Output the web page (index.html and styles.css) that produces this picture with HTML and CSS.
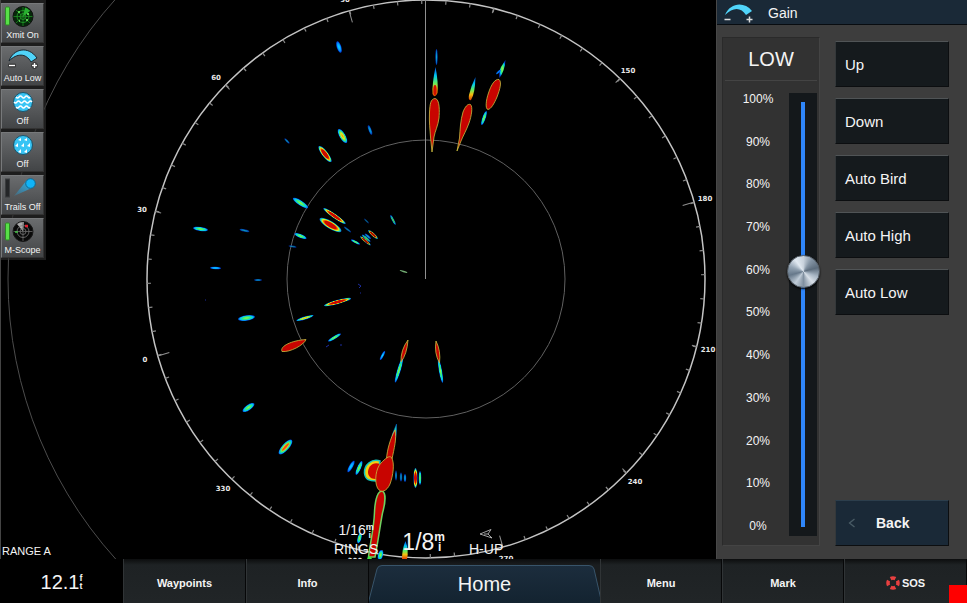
FILE: index.html
```html
<!DOCTYPE html>
<html lang="en">
<head>
    <meta charset="UTF-8">
    <meta name="viewport" content="width=device-width, initial-scale=1.0">
    <title>Radar</title>
    <link rel="stylesheet" href="styles.css">
</head>
<body>
    <div class="main">
        <div class="radar">
            <svg class="scope" viewBox="0 0 716 559" preserveAspectRatio="xMinYMin slice">
                <defs>
                    <radialGradient id="hot">
                        <stop offset="0.5" stop-color="#cc0800"/>
                        <stop offset="0.65" stop-color="#f08000"/>
                        <stop offset="0.76" stop-color="#e8f020"/>
                        <stop offset="0.87" stop-color="#20e0a0"/>
                        <stop offset="1" stop-color="#0060f0"/>
                    </radialGradient>
                    <radialGradient id="warm">
                        <stop offset="0" stop-color="#f09010"/>
                        <stop offset="0.35" stop-color="#e8e820"/>
                        <stop offset="0.7" stop-color="#30e880"/>
                        <stop offset="0.85" stop-color="#00b8f0"/>
                        <stop offset="1" stop-color="#0040e0"/>
                    </radialGradient>
                    <radialGradient id="mild">
                        <stop offset="0" stop-color="#a0f040"/>
                        <stop offset="0.45" stop-color="#30f080"/>
                        <stop offset="0.75" stop-color="#00c8f0"/>
                        <stop offset="1" stop-color="#0040e0"/>
                    </radialGradient>
                    <radialGradient id="cool">
                        <stop offset="0" stop-color="#10d8ff"/>
                        <stop offset="0.6" stop-color="#0098ff"/>
                        <stop offset="1" stop-color="#0030d0"/>
                    </radialGradient>
                    <linearGradient id="tip" x1="0" y1="0" x2="0" y2="1">
                        <stop offset="0" stop-color="#0050f0"/>
                        <stop offset="0.3" stop-color="#00c8f0"/>
                        <stop offset="0.55" stop-color="#60f060"/>
                        <stop offset="0.75" stop-color="#f0c010"/>
                        <stop offset="1" stop-color="#e04000"/>
                    </linearGradient>
                </defs>

                <!-- range rings -->
                <circle class="ring far" cx="426" cy="279" r="418"/>
                <circle class="ring" cx="426" cy="279" r="139"/>
                <circle class="ring edge" cx="426" cy="279" r="279"/>
                <circle class="ticks" cx="426" cy="279" r="277" pathLength="720" stroke-dasharray="0.5 9.5" transform="rotate(-16 426 279)"/>
                <g class="major">
                    <path d="M426 0v12" transform="rotate(-16 426 279)"/>
                    <path d="M426 0v5" transform="rotate(14 426 279)"/>
                    <path d="M426 0v6" transform="rotate(44 426 279)"/>
                    <path d="M426 0v12" transform="rotate(74 426 279)"/>
                    <path d="M426 0v5" transform="rotate(104 426 279)"/>
                    <path d="M426 0v6" transform="rotate(134 426 279)"/>
                    <path d="M426 0v12" transform="rotate(164 426 279)"/>
                    <path d="M426 0v12" transform="rotate(254 426 279)"/>
                    <path d="M426 0v6" transform="rotate(284 426 279)"/>
                    <path d="M426 0v6" transform="rotate(314 426 279)"/>
                </g>
                <path class="heading" d="M425.5 0V279"/>

                <!-- echoes, upper left -->
                <ellipse cx="339" cy="47" rx="6" ry="2.3" fill="url(#cool)" transform="rotate(72 339 47)"/>
                <ellipse cx="287" cy="141" rx="3.5" ry="1" fill="url(#cool)" opacity=".7" transform="rotate(45 287 141)"/>
                <ellipse cx="325" cy="154" rx="10" ry="3" fill="url(#hot)" transform="rotate(52 325 154)"/>
                <ellipse cx="342.5" cy="136" rx="8" ry="3" fill="url(#warm)" transform="rotate(60 342.5 136)"/>
                <ellipse cx="370" cy="130" rx="5" ry="1.5" fill="url(#cool)" opacity=".8" transform="rotate(70 370 130)"/>
                <ellipse cx="300.5" cy="203" rx="9" ry="2.5" fill="url(#mild)" transform="rotate(33 300.5 203)"/>
                <ellipse cx="334.5" cy="216" rx="13.5" ry="2.2" fill="url(#hot)" transform="rotate(35 334.5 216)"/>
                <ellipse cx="330.5" cy="225" rx="12.5" ry="3.8" fill="url(#hot)" transform="rotate(31 330.5 225)"/>
                <ellipse cx="200.5" cy="229" rx="7.5" ry="2" fill="url(#mild)" transform="rotate(8 200.5 229)"/>
                <ellipse cx="244.5" cy="230.5" rx="5" ry="1.2" fill="url(#cool)" opacity=".7" transform="rotate(12 244.5 230.5)"/>
                <ellipse cx="300.5" cy="236" rx="6.5" ry="2" fill="url(#mild)" transform="rotate(22 300.5 236)"/>
                <ellipse cx="347.5" cy="229.5" rx="4.5" ry="1" fill="url(#cool)" opacity=".6" transform="rotate(38 347.5 229.5)"/>
                <ellipse cx="366.5" cy="221" rx="3.5" ry="0.8" fill="url(#cool)" opacity=".5" transform="rotate(45 366.5 221)"/>
                <ellipse cx="393" cy="220" rx="5.5" ry="1.2" fill="url(#mild)" opacity=".8" transform="rotate(62 393 220)"/>
                <ellipse cx="373" cy="234.5" rx="6.5" ry="1.6" fill="url(#hot)" opacity=".85" transform="rotate(42 373 234.5)"/>
                <g transform="rotate(40 366 240)" opacity=".8">
                    <ellipse cx="365" cy="236" rx="4" ry="1.2" fill="url(#cool)"/>
                    <ellipse cx="365" cy="238.5" rx="5.5" ry="1.3" fill="url(#mild)"/>
                    <ellipse cx="366" cy="241" rx="7" ry="1.4" fill="url(#hot)"/>
                </g>
                <ellipse cx="355.5" cy="242" rx="5" ry="1.2" fill="url(#mild)" transform="rotate(28 355.5 242)"/>
                <ellipse cx="292.5" cy="246.5" rx="4" ry="1" fill="url(#cool)" opacity=".6" transform="rotate(10 292.5 246.5)"/>
                <ellipse cx="215.5" cy="268" rx="5.5" ry="1.3" fill="url(#cool)" transform="rotate(2 215.5 268)"/>
                <ellipse cx="258" cy="280" rx="4" ry="1" fill="url(#cool)" opacity=".7"/>
                <ellipse cx="403.5" cy="271.5" rx="4" ry="0.7" fill="#90d890" opacity=".8" transform="rotate(18 403.5 271.5)"/>
                <path class="speck" d="M358 284l3 2M359 288l2-2M360 293h1M205 300h1M326 347l3-2M340 345h2"/>

                <!-- echoes, lower left -->
                <ellipse cx="337.5" cy="302" rx="14" ry="2.1" fill="url(#hot)" transform="rotate(-15 337.5 302)"/>
                <ellipse cx="246.5" cy="318" rx="8.5" ry="2.7" fill="url(#mild)" transform="rotate(-8 246.5 318)"/>
                <ellipse cx="305" cy="318" rx="9" ry="1.5" fill="url(#warm)" transform="rotate(-17 305 318)"/>
                <path class="echo" d="M282 351.500C279.500 346 292 340.500 306 339.500C304 345 290 352.500 282 351.500Z"/>
                <ellipse cx="334.5" cy="337.5" rx="7.5" ry="1.6" fill="url(#mild)" transform="rotate(-31 334.5 337.5)"/>
                <ellipse cx="382.5" cy="355.5" rx="5" ry="1.3" fill="url(#cool)" transform="rotate(-62 382.5 355.5)"/>
                <ellipse cx="399" cy="370" rx="13" ry="1.8" fill="url(#mild)" transform="rotate(-73 399 370)"/>
                <path class="echo" d="M408 340Q407 354 401 362Q400.500 350 408 340Z"/>
                <ellipse cx="440.5" cy="371" rx="12" ry="1.6" fill="url(#mild)" transform="rotate(80 440.5 371)"/>
                <path class="echo" d="M436 341Q441 351 439.500 363Q434 353 436 341Z"/>
                <ellipse cx="248.5" cy="407.5" rx="7" ry="2.7" fill="url(#mild)" transform="rotate(-35 248.5 407.5)"/>
                <ellipse cx="285.5" cy="447" rx="9.5" ry="3.5" fill="url(#warm)" transform="rotate(-48 285.5 447)"/>
                <ellipse cx="285.5" cy="447" rx="5" ry="1.2" fill="#f05010" transform="rotate(-48 285.5 447)"/>

                <!-- echoes, top -->
                <ellipse cx="436.5" cy="57" rx="1.2" ry="8" fill="url(#cool)" opacity=".8"/>
                <path fill="url(#tip)" d="M435.500 67Q438.500 82 437.500 93Q435 99 432.500 94Q432 84 435.500 67Z"/>
                <ellipse cx="435" cy="90" rx="1.7" ry="5" fill="#d01000"/>
                <path class="echo" d="M435 98.500C440 99 439.500 112 439 118C438 126 435 131 434 137L432 152L430.500 137C430 129 429 122 429.500 112C430 104 430.500 99 435 98.500Z"/>
                <path fill="url(#tip)" d="M475.500 77Q475 94 471 100Q468 101 469 95Q471 86 475.500 77Z"/>
                <path class="echo" d="M470.500 104.500C473 107 471.500 116 469 123C466.500 130 463 136 461 141L457 151L459.500 138C460 130 460.500 120 463 112C465 107 467.500 103.500 470.500 104.500Z"/>
                <path fill="url(#mild)" d="M505.500 60Q505 70 499.500 78Q498.500 72 501 67Z"/>
                <ellipse cx="498.5" cy="72" rx="1" ry="3" fill="#0070f0" transform="rotate(50 498.5 72)"/>
                <path class="echo" d="M499 79.500C502 82 500 89 497 97C494 104 491 109 488 109.500C485 109 486 100 488.500 93C491 85 495 78.500 499 79.500Z"/>
                <ellipse cx="484" cy="118" rx="7.5" ry="1.7" fill="url(#mild)" transform="rotate(-71 484 118)"/>

                <!-- echoes, bottom -->
                <ellipse cx="351" cy="466.5" rx="6.5" ry="1.9" fill="url(#cool)" transform="rotate(-60 351 466.5)"/>
                <ellipse cx="359" cy="468" rx="7.5" ry="2" fill="url(#mild)" transform="rotate(-66 359 468)"/>
                <path class="halo" d="M380 461C372 458 364 465 364.500 473C365 480 370 481 376 481Z"/>
                <path fill="#d00800" d="M380 464C373 461 367.500 467 368 473C369 478 372 479 377 479Z"/>
                <path class="tail" d="M396.500 424Q397 437 394 442L389 452L392.500 434Z"/>
                <path class="echo" d="M395 430C397 438 394 449 392 459L386.500 459C387 450 390.500 438 395 430Z"/>
                <path class="echo wide" d="M383 491.500C386 494 385 504 382.500 513C380 526 378 542 375 557L368.500 557C370 544 374 528 374.500 512C375 500 378 489 383 491.500Z"/>
                <path class="echo" d="M391.500 457.500C395 463 393 476 390 484C387 491 381 494 377.500 488C374 481 376 468 381 463C385 459 389 455 391.500 457.500Z"/>
                <ellipse cx="396" cy="475.5" rx="1" ry="5" fill="url(#cool)" opacity=".7"/>
                <ellipse cx="401" cy="477" rx="1.2" ry="4.5" fill="url(#cool)" opacity=".7"/>
                <ellipse cx="405" cy="478" rx="1.2" ry="4" fill="url(#cool)" opacity=".8"/>
                <ellipse cx="415.5" cy="478" rx="2" ry="10" fill="url(#hot)"/>
                <ellipse cx="420" cy="478" rx="1.3" ry="7" fill="url(#mild)"/>
                <ellipse cx="359.5" cy="538" rx="2" ry="5.5" fill="url(#mild)" transform="rotate(15 359.5 538)"/>
                <ellipse cx="380.5" cy="555" rx="2.5" ry="5" fill="url(#mild)" transform="rotate(15 380.5 555)"/>
                <path fill="#40e840" d="M367 559q2-6 5 0Z"/>
                <path fill="url(#tip)" d="M405.500 541Q409 550 407 559H402Q402 549 405.500 541Z"/>

                <g class="degrees">
                    <text x="345" y="2">90</text>
                    <text x="216" y="80">60</text>
                    <text x="142" y="212">30</text>
                    <text x="145" y="362">0</text>
                    <text x="223" y="491">330</text>
                    <text x="355" y="563">300</text>
                    <text x="506" y="561">270</text>
                    <text x="635" y="484">240</text>
                    <text x="708" y="352">210</text>
                    <text x="705" y="201">180</text>
                    <text x="628" y="73">150</text>
                </g>
            </svg>

            <div class="tools">
                <button class="tool">
                    <svg class="icon" viewBox="0 0 40 24">
                        <rect x="2.5" y="3" width="4" height="18" rx="1" fill="#58e048" stroke="#2c8a24"/>
                        <circle cx="20" cy="12.5" r="10" fill="#06280a" stroke="#101010"/>
                        <path d="M20 3v19M10.500 12.500h19M13 6l14 13M27 6L13 19" stroke="#1d8a22" stroke-width=".8" fill="none"/>
                        <circle cx="20" cy="12.5" r="6" fill="none" stroke="#22a52a" stroke-width=".8"/>
                        <circle cx="20" cy="12.5" r="3" fill="none" stroke="#22a52a" stroke-width=".8"/>
                        <path d="M20 12.500L22 3.500A9 9 0 0 1 27 7Z" fill="#28b030"/>
                        <path d="M15 8h2M23 16h2M16 17h1M24 10h2" stroke="#70f060" stroke-width="1.5"/>
                    </svg>
                    <span>Xmit On</span>
                </button>
                <button class="tool">
                    <svg class="icon" viewBox="0 0 40 24">
                        <path d="M6 14C10 2 25-2 34 11L28 15C23 6 14 6 6 14Z" fill="#50d4fa" stroke="#1b2730"/>
                        <path d="M5.500 18.500h7M28.500 18.500h6M31.500 15.500v6" stroke="#222" stroke-width="3.5"/>
                        <path d="M6 18.500h6M29 18.500h5M31.500 16v5" stroke="#fff" stroke-width="1.5"/>
                    </svg>
                    <span>Auto Low</span>
                </button>
                <button class="tool">
                    <svg class="icon" viewBox="0 0 40 24">
                        <circle cx="20" cy="12" r="9.5" fill="#38c4f4" stroke="#1a546c"/>
                        <path d="M13 7q1.500 2 3 0t3 0t3 0t3 0t2 0M11 12q1.500 2 3 0t3 0t3 0t3 0t3 0t3 0M13 17q1.500 2 3 0t3 0t3 0t3 0t2 0" fill="none" stroke="#fff" stroke-width="1.3"/>
                    </svg>
                    <span>Off</span>
                </button>
                <button class="tool">
                    <svg class="icon" viewBox="0 0 40 24">
                        <circle cx="20" cy="12" r="9.5" fill="#38c4f4" stroke="#1a546c"/>
                        <path d="M15 7l3-2v3zM21 7l3-2v3zM12 13l3-3v4zM18 13l3-3v4zM24 13l3-3v4zM15 19l3-3v4zM21 19l3-3v4z" fill="#fff"/>
                    </svg>
                    <span>Off</span>
                </button>
                <button class="tool">
                    <svg class="icon" viewBox="0 0 40 24">
                        <defs>
                            <linearGradient id="trail" x1="0" y1="1" x2="1" y2="0">
                                <stop offset="0" stop-color="#20a8e8" stop-opacity=".2"/>
                                <stop offset="1" stop-color="#20b8f8"/>
                            </linearGradient>
                        </defs>
                        <rect x="2.5" y="3" width="4" height="18" fill="#242628" stroke="#3a3c3e"/>
                        <path d="M11 20L24 4L31 11Z" fill="url(#trail)"/>
                        <circle cx="27.5" cy="7.5" r="4.8" fill="#10b4f8" stroke="#106890"/>
                    </svg>
                    <span>Trails Off</span>
                </button>
                <button class="tool">
                    <svg class="icon" viewBox="0 0 40 24">
                        <rect x="2.5" y="4" width="4" height="17" rx="1" fill="#58e048" stroke="#2c8a24"/>
                        <circle cx="20" cy="12.5" r="10" fill="#0a0a0a" stroke="#181818"/>
                        <path d="M20 12.500L14 5A10 10 0 0 1 21 3Z" fill="#aaa"/>
                        <path d="M20 3v19M10.500 12.500h19" stroke="#666" stroke-width=".8"/>
                        <circle cx="20" cy="12.5" r="6" fill="none" stroke="#777" stroke-width=".8"/>
                        <circle cx="20" cy="12.5" r="3" fill="none" stroke="#777" stroke-width=".8"/>
                        <path d="M22 7h3" stroke="#e02030" stroke-width="2.5"/>
                        <path d="M12 13h3" stroke="#40c040" stroke-width="1.5"/>
                    </svg>
                    <span>M-Scope</span>
                </button>
            </div>

            <div class="range-name">RANGE A</div>
            <div class="range-info">
                <div class="info">
                    <div class="small">1/16<span class="unit"><i>m</i><i>i</i></span></div>
                    <div>RINGS</div>
                </div>
                <div class="range">1/8<span class="unit"><i>m</i><i>i</i></span></div>
                <div class="info">
                    <svg class="arrow" viewBox="0 0 14 12"><path d="M1 6L12 1.500L9 6L13 10Z" fill="none" stroke="#ccc" stroke-width=".8"/><path d="M5 6h4" stroke="#ccc" stroke-width=".8"/></svg>
                    <div>H-UP</div>
                </div>
            </div>
        </div>

        <div class="panel">
            <div class="title">
                <svg class="gain-icon" viewBox="0 0 30 20">
                    <path d="M1 12C6 0 20-2 28 8L22 12C17 4 9 4 1 12Z" fill="#50d4fa"/>
                    <path d="M.5 16.500h6M22.500 16.500h6M25.500 13.500v6" stroke="#ddd" stroke-width="1.5"/>
                </svg>
                <h1>Gain</h1>
            </div>
            <div class="content">
                <div class="gain">
                    <label class="level" for="gain">LOW</label>
                    <div class="slider">
                        <ul class="scale">
                            <li>100%</li>
                            <li>90%</li>
                            <li>80%</li>
                            <li>70%</li>
                            <li>60%</li>
                            <li>50%</li>
                            <li>40%</li>
                            <li>30%</li>
                            <li>20%</li>
                            <li>10%</li>
                            <li>0%</li>
                        </ul>
                        <input class="track" id="gain" type="range" min="0" max="100" step="0.1" value="60.6">
                    </div>
                </div>
                <div class="options">
                    <button class="btn">Up</button>
                    <button class="btn">Down</button>
                    <button class="btn">Auto Bird</button>
                    <button class="btn">Auto High</button>
                    <button class="btn">Auto Low</button>
                    <button class="btn back">
                        <svg class="chevron" viewBox="0 0 8 10"><path d="M6.500 1L1.500 5L6.500 9" fill="none" stroke="#4a5c66" stroke-width="1.3"/></svg>
                        <span>Back</span>
                    </button>
                </div>
            </div>
        </div>
    </div>

    <div class="bar">
        <div class="depth">12.1<span class="unit"><i>f</i><i>t</i></span></div>
        <button class="key">Waypoints</button>
        <button class="key">Info</button>
        <button class="home">
            <svg class="tab" viewBox="0 0 231 38" preserveAspectRatio="none">
                <defs>
                    <linearGradient id="blue" x1="0" y1="0" x2="0" y2="1">
                        <stop offset="0" stop-color="#1c2d3d"/>
                        <stop offset="1" stop-color="#132330"/>
                    </linearGradient>
                </defs>
                <path d="M-1 39L8 4Q9 .5 13 .5H220Q224 .5 225 4L233 39Z" fill="url(#blue)" stroke="#38546a"/>
            </svg>
            <span>Home</span>
        </button>
        <button class="key">Menu</button>
        <button class="key">Mark</button>
        <button class="key">
            <svg class="sos" viewBox="0 0 14 14">
                <circle cx="7" cy="7" r="5" fill="none" stroke="#e84040" stroke-width="3.5" pathLength="8" stroke-dasharray="1.3 .7" stroke-dashoffset=".65"/>
            </svg>SOS
        </button>
        <div class="corner"></div>
    </div>
</body>
</html>
```

FILE: styles.css
```css
*{
    margin: 0;
    padding: 0;
    box-sizing: border-box;
}
body{
    height: 100vh;
    display: flex;
    flex-direction: column;
    background: #000;
    color: #f4f4f4;
    font-family: "Liberation Sans", Arial, sans-serif;
    font-size: 14px;
    overflow: hidden;
}
button{
    border: none;
    color: inherit;
    font-family: inherit;
    cursor: pointer;
}
.main{
    flex: 1;
    min-height: 0;
    display: flex;
}

/* radar */
.radar{
    flex: 1;
    min-width: 0;
    position: relative;
    overflow: hidden;
    border-left: 1px solid #444;
}
.scope{
    display: block;
    position: absolute;
    left: -1px;
    top: 0;
    width: calc(100% + 1px);
    height: 100%;
}
.ring{
    fill: none;
    stroke: #606060;
    stroke-width: 1;
}
.far{
    stroke: #4c4c4c;
}
.edge{
    stroke: #c4c4c4;
    stroke-width: 1.5;
}
.ticks{
    fill: none;
    stroke: #888;
    stroke-width: 4;
}
.major{
    stroke: #909090;
}
.heading{
    stroke: #909090;
}
.speck{
    stroke: #1c2ca0;
    fill: none;
}
.echo{
    fill: #c80400;
    stroke: #c8c040;
    stroke-width: 0.8;
}
.wide{
    stroke: #70d060;
    stroke-width: 1.5;
}
.tail{
    fill: #20d0b0;
    stroke: #0060d0;
    stroke-width: 0.5;
}
.halo{
    fill: #f0d010;
    stroke: #10c8c0;
    stroke-width: 1.5;
}
.degrees{
    fill: #e8e8e8;
    font-family: "DejaVu Sans", sans-serif;
    font-size: 7px;
    font-weight: bold;
    text-anchor: middle;
}

/* left buttons */
.tools{
    position: absolute;
    left: 0;
    top: 0;
    padding: 3px 2px 2px 0;
    display: flex;
    flex-direction: column;
    gap: 3px;
    background: rgba(45,45,45,0.65);
}
.tool{
    width: 43px;
    height: 40px;
    display: flex;
    flex-direction: column;
    align-items: center;
    background: linear-gradient(#6a6c6e, #424446);
    border: 1px solid #77797b;
    border-right-color: #333;
    border-bottom-color: #333;
    font-size: 9px;
    line-height: 14px;
    white-space: nowrap;
}
.icon{
    width: 40px;
    height: 24px;
    flex: none;
}

/* texts over the radar */
.range-name{
    position: absolute;
    left: 1px;
    bottom: 0;
    font-size: 11px;
    line-height: 16px;
}
.range-info{
    position: absolute;
    left: 333px;
    bottom: 0;
    display: flex;
    align-items: flex-end;
    gap: 24px;
}
.info{
    font-size: 14px;
    line-height: 19px;
    text-align: center;
}
.small{
    display: flex;
    justify-content: center;
    align-items: center;
}
.unit{
    display: inline-flex;
    flex-direction: column;
    align-items: center;
    font-size: 9px;
    line-height: 8px;
    font-weight: bold;
}
.unit i{
    font-style: normal;
}
.range{
    display: flex;
    align-items: center;
    font-size: 23px;
    line-height: 34px;
}
.range .unit{
    font-size: 12px;
    line-height: 10px;
}
.arrow{
    width: 14px;
    height: 12px;
    display: block;
    margin: 0 auto;
}

/* gain panel */
.panel{
    width: 251px;
    display: flex;
    flex-direction: column;
    background: #3d3d3d;
    border-left: 1px solid #484848;
}
.title{
    height: 25px;
    display: flex;
    align-items: center;
    gap: 14px;
    padding: 2px 7px 0;
    background: #1a2937;
    border-bottom: 1px solid #080c10;
}
.title h1{
    font-size: 14px;
    font-weight: normal;
}
.gain-icon{
    width: 30px;
    height: 20px;
}
.content{
    flex: 1;
    min-height: 0;
    display: flex;
    gap: 15px;
    padding: 12px 18px 13px 5px;
}
.gain{
    width: 98px;
    display: flex;
    flex-direction: column;
    background: #323232;
    border: 1px solid #2a2a2a;
    border-right-color: #444;
    border-bottom-color: #444;
}
.level{
    margin: 0 2px;
    height: 43px;
    line-height: 43px;
    font-size: 20px;
    text-align: center;
    border-bottom: 1px solid #444;
}
.slider{
    flex: 1;
    min-height: 0;
    display: flex;
    justify-content: space-between;
    padding: 12px 2px 9px 16px;
}
.scale{
    width: 38px;
    display: flex;
    flex-direction: column;
    justify-content: space-between;
    padding-bottom: 4px;
    list-style: none;
    font-size: 12px;
    line-height: 12px;
    text-align: center;
}
.track{
    appearance: none;
    -webkit-appearance: none;
    writing-mode: vertical-lr;
    direction: rtl;
    width: 28px;
    height: 100%;
    background: #14181b;
    cursor: pointer;
}
.track::-webkit-slider-runnable-track{
    width: 4px;
    height: 100%;
    border-radius: 2px;
    background: linear-gradient(#2f86fa, #2f86fa) center / 4px calc(100% - 18px) no-repeat;
}
.track::-webkit-slider-thumb{
    -webkit-appearance: none;
    width: 33px;
    height: 33px;
    margin-left: -14px;
    border: 1px solid #58616a;
    border-radius: 50%;
    background: conic-gradient(#c8d2dc, #8494a4 35deg, #5c6c7c 75deg, #a8b6c4 110deg, #d8e0e8 140deg, #8090a0 180deg, #c0ccd8 215deg, #66788a 255deg, #94a4b4 290deg, #e0e8f0 325deg, #c8d2dc);
    box-shadow: 0 1px 2px #000;
}
.options{
    flex: 1;
    display: flex;
    flex-direction: column;
    gap: 11px;
    padding-top: 4px;
}
.btn{
    height: 46px;
    padding: 0 9px;
    background: #151a1d;
    border: 1px solid #0c0e10;
    border-top-color: #505456;
    border-left-color: #34383a;
    font-size: 15px;
    text-align: left;
}
.back{
    margin-top: auto;
    display: flex;
    align-items: center;
    gap: 20px;
    padding: 0 12px;
    background: #1a2937;
    border-top-color: #2c3e4c;
    font-weight: bold;
    font-size: 14px;
}
.chevron{
    width: 8px;
    height: 10px;
}

/* bottom bar */
.bar{
    height: 44px;
    display: grid;
    grid-template-columns: 123fr 123fr 123fr 231fr 122fr 122fr 123fr;
    position: relative;
    background: #121415;
}
.depth{
    display: flex;
    align-items: center;
    justify-content: center;
    padding-top: 2px;
    background: #000;
    font-size: 20px;
}
.key{
    display: flex;
    align-items: center;
    justify-content: center;
    gap: 2px;
    padding-top: 3px;
    background: linear-gradient(#0c0d0e, #1e2224 6px, #212527);
    border-left: 1px solid #303436;
    border-right: 1px solid #060708;
    font-size: 11px;
    font-weight: bold;
}
.home{
    position: relative;
    padding-top: 6px;
    background: linear-gradient(#0c0d0e, #1a1d1f 6px);
    font-size: 20px;
}
.home span{
    position: relative;
}
.tab{
    position: absolute;
    left: 0;
    bottom: 0;
    width: 100%;
    height: 38px;
}
.sos{
    width: 14px;
    height: 14px;
}
.corner{
    position: absolute;
    right: 0;
    bottom: 0;
    width: 18px;
    height: 18px;
    background: #f00;
}
```
